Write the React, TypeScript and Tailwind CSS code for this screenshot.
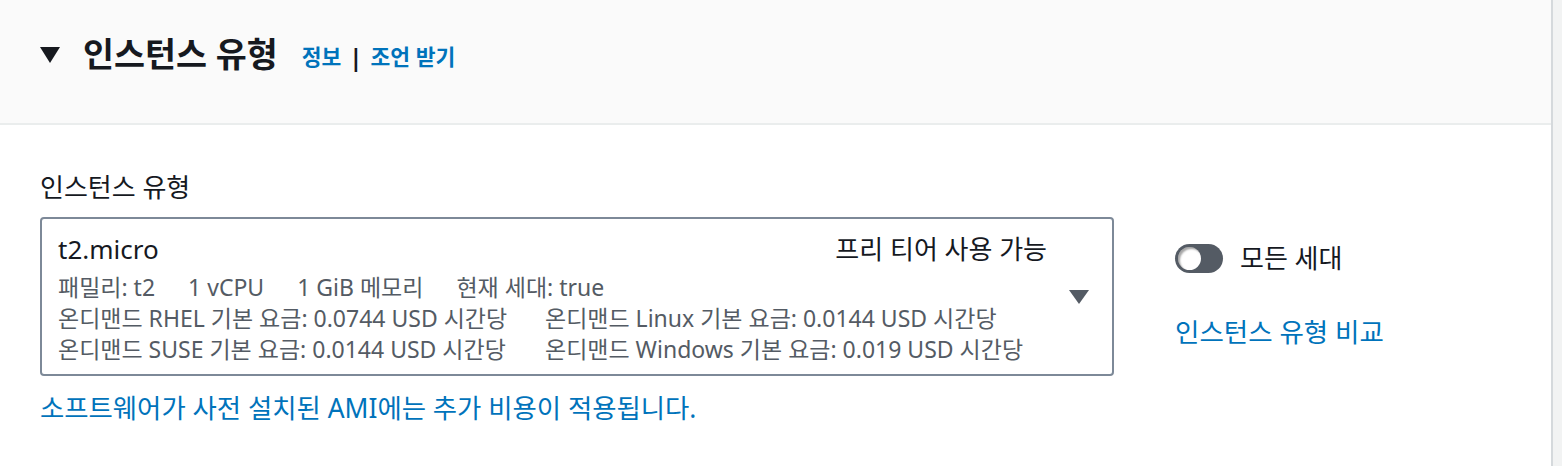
import React from "react";

const font = { fontFamily: '"Noto Sans", "Noto Sans CJK KR", sans-serif' };

export default function App() {
  return (
    <div className="flex w-[1562px] h-[466px] bg-[#f2f3f3] overflow-hidden" style={font}>
      <div className="w-[1553px] h-full bg-white border-r-2 border-[#d5d9dc] flex flex-col">
        <div className="h-[125px] bg-[#fafafa] border-b-2 border-[#eaeded] flex items-center pl-[40px] pb-[14px]">
          <svg width="20" height="16" viewBox="0 0 20 16" className="mr-[23px]">
            <polygon points="0,0 20,0 10,16" fill="#16191f" />
          </svg>
          <span className="text-[33.7px] font-bold text-[#16191f] leading-none">인스턴스 유형</span>
          <span className="ml-[24px] text-[21.5px] font-bold text-[#0073bb] leading-none mt-[4px] flex items-center">
            정보
            <span className="text-[#16191f] mx-[8px] text-[24px]">|</span>
            조언 받기
          </span>
        </div>
        <div className="pl-[40px] pt-[47px]">
          <div className="text-[26px] leading-[30px] text-[#16191f]">인스턴스 유형</div>
          <div className="flex items-start mt-[15px]">
            <div className="w-[1074px] h-[159px] border-2 border-[#7d8998] rounded-[4px] flex pl-[16px] pt-[15px]">
              <div className="flex-1">
                <div className="flex justify-between items-center leading-[30px] text-[26px] text-[#16191f]">
                  <span>t2.micro</span>
                  <span>프리 티어 사용 가능</span>
                </div>
                <div className="mt-[8px] text-[23px] leading-[31px] text-[#545b64]">
                  <div className="flex gap-[33px]">
                    <span>패밀리: t2</span>
                    <span>1 vCPU</span>
                    <span>1 GiB 메모리</span>
                    <span>현재 세대: true</span>
                  </div>
                  <div className="flex">
                    <span className="w-[487px]">온디맨드 RHEL 기본 요금: 0.0744 USD 시간당</span>
                    <span>온디맨드 Linux 기본 요금: 0.0144 USD 시간당</span>
                  </div>
                  <div className="flex">
                    <span className="w-[487px]">온디맨드 SUSE 기본 요금: 0.0144 USD 시간당</span>
                    <span>온디맨드 Windows 기본 요금: 0.019 USD 시간당</span>
                  </div>
                </div>
              </div>
              <div className="w-[65px] flex justify-start pl-[22px] pt-[56px]">
                <svg width="20" height="14" viewBox="0 0 20 14">
                  <polygon points="0,0 20,0 10,14" fill="#545b64" />
                </svg>
              </div>
            </div>
            <div className="ml-[61px] pt-[26px] flex flex-col">
              <div className="flex items-center h-[30px]">
                <div className="relative w-[48px] h-[29px] rounded-full bg-[#545b64]">
                  <div className="absolute left-[3px] top-[3px] w-[23px] h-[23px] rounded-full bg-white shadow-[inset_2px_2px_2px_rgba(0,0,0,0.35)]" />
                </div>
                <span className="ml-[17px] text-[26px] leading-[30px] text-[#16191f]">모든 세대</span>
              </div>
              <div className="mt-[44px] text-[26.5px] leading-[30px] text-[#0073bb]">인스턴스 유형 비교</div>
            </div>
          </div>
          <div className="mt-[17px] text-[26.4px] leading-[30px] text-[#0073bb]">
            소프트웨어가 사전 설치된 AMI에는 추가 비용이 적용됩니다.
          </div>
        </div>
      </div>
    </div>
  );
}
